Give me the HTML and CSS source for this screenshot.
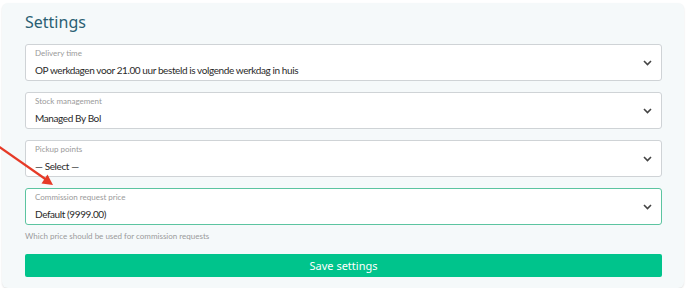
FILE: index.html
```html
<!DOCTYPE html>
<html lang="nl">
<head>
    <meta charset="UTF-8">
    <meta name="viewport" content="width=device-width, initial-scale=1.0">
    <title>Settings</title>
    <link rel="stylesheet" href="styles.css">
</head>
<body>

<div class="settings-card">
    <h2 class="settings-title">Settings</h2>

    <div class="field">
        <div class="field-text">
            <span class="field-label">Delivery time</span>
            <span class="field-value">OP werkdagen voor 21.00 uur besteld is volgende werkdag in huis</span>
        </div>
        <svg class="chevron" width="9" height="6" viewBox="0 0 9 6"><polyline points="1,1 4.5,4.5 8,1" fill="none" stroke="#444" stroke-width="1.6"/></svg>
    </div>

    <div class="field">
        <div class="field-text">
            <span class="field-label">Stock management</span>
            <span class="field-value">Managed By Bol</span>
        </div>
        <svg class="chevron" width="9" height="6" viewBox="0 0 9 6"><polyline points="1,1 4.5,4.5 8,1" fill="none" stroke="#444" stroke-width="1.6"/></svg>
    </div>

    <div class="field">
        <div class="field-text">
            <span class="field-label">Pickup points</span>
            <span class="field-value">&mdash; Select &mdash;</span>
        </div>
        <svg class="chevron" width="9" height="6" viewBox="0 0 9 6"><polyline points="1,1 4.5,4.5 8,1" fill="none" stroke="#444" stroke-width="1.6"/></svg>
    </div>

    <div class="field focused">
        <div class="field-text">
            <span class="field-label">Commission request price</span>
            <span class="field-value">Default (9999.00)</span>
        </div>
        <svg class="chevron" width="9" height="6" viewBox="0 0 9 6"><polyline points="1,1 4.5,4.5 8,1" fill="none" stroke="#444" stroke-width="1.6"/></svg>
    </div>
    <p class="field-help">Which price should be used for commission requests</p>

    <button class="save-button">Save settings</button>
</div>

<svg class="pointer-arrow" width="70" height="200" viewBox="0 0 70 200">
    <line x1="-2" y1="146" x2="46" y2="179.5" stroke="#e63a27" stroke-width="2.2"/>
    <polygon points="53,185 41.5,183.5 47.5,174.5" fill="#e63a27"/>
</svg>

</body>
</html>
```

FILE: styles.css
```css
body {
    margin: 0;
    background-color: #ffffff;
    font-family: 'Lato', sans-serif;
    color: #333;
}

.settings-card {
    margin: 3px 4px 0 2px;
    padding: 7px 22px 11px 23px;
    background-color: #f5f9fa;
    border-radius: 6px;
    box-shadow: 0 1px 2px rgba(0, 0, 0, 0.12);
}

.settings-title {
    margin: 0 0 10px 0;
    font-family: 'Noto Sans', sans-serif;
    font-weight: 400;
    font-size: 16px;
    line-height: 24px;
    color: #2a5f73;
}

.field {
    display: flex;
    align-items: center;
    justify-content: space-between;
    height: 37px;
    box-sizing: border-box;
    padding: 1px 9px 0 9px;
    margin-bottom: 11px;
    background-color: #ffffff;
    border: 1px solid #cfd3d6;
    border-radius: 3px;
}

.field.focused {
    border-color: #5cc4a0;
    margin-bottom: 0;
}

.field-text {
    display: flex;
    flex-direction: column;
}

.field-label {
    font-size: 8px;
    line-height: 11px;
    color: #9a9a9a;
    margin-bottom: 3px;
}

.field-value {
    font-size: 10px;
    line-height: 16px;
    letter-spacing: -0.4px;
    color: #2a2a2a;
}

.chevron {
    margin-top: -1px;
    flex-shrink: 0;
}

.field-help {
    margin: 5px 0 12px 0;
    font-size: 8px;
    line-height: 12px;
    color: #9a9a9a;
}

.save-button {
    display: block;
    width: 100%;
    height: 23px;
    padding: 0;
    border: none;
    border-radius: 2px;
    background-color: #00c48c;
    color: #ffffff;
    font-family: 'Noto Sans', sans-serif;
    font-size: 11px;
    line-height: 21px;
    cursor: pointer;
}

.pointer-arrow {
    position: absolute;
    left: 0;
    top: 0;
}
```
